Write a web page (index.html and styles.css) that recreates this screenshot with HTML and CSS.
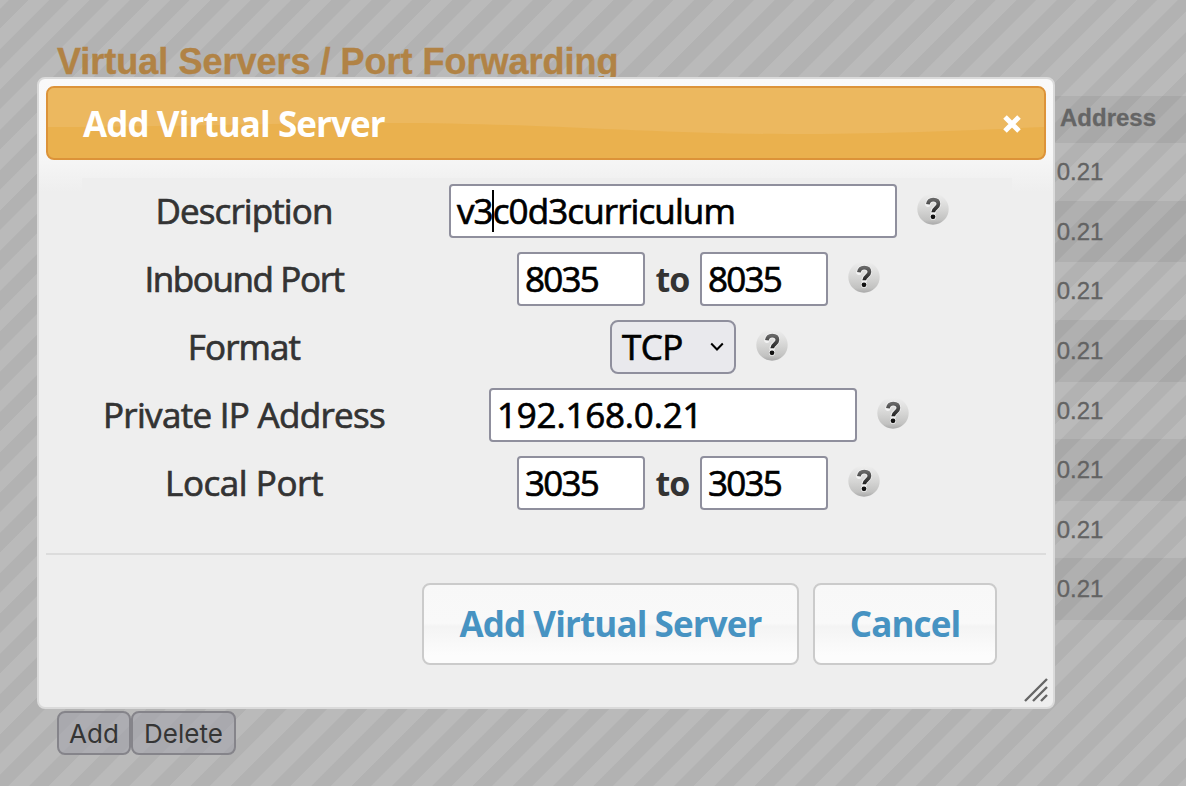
FILE: index.html
```html
<!DOCTYPE html>
<html lang="en">
<head>
<meta charset="utf-8">
<title>Virtual Servers / Port Forwarding</title>
<link rel="stylesheet" href="styles.css">
</head>
<body>
<svg class="defs" width="0" height="0" aria-hidden="true">
  <defs>
    <linearGradient id="disc" x1="0" y1="0" x2="0" y2="1">
      <stop offset="0" stop-color="#efefef"/>
      <stop offset="0.5" stop-color="#d6d6d5"/>
      <stop offset="0.85" stop-color="#c2c2c1"/>
      <stop offset="1" stop-color="#a9a9a9"/>
    </linearGradient>
    <linearGradient id="mark" x1="0" y1="0" x2="0" y2="1">
      <stop offset="0" stop-color="#666"/>
      <stop offset="1" stop-color="#222"/>
    </linearGradient>
    <symbol id="help" viewBox="0 0 32 32">
      <circle cx="16" cy="16" r="15.7" fill="url(#disc)"/>
      <path d="M10.9 11.3C11.4 8.2 13.3 6.6 16.2 6.6c3.2 0 5.2 1.6 5.2 4.4 0 3.9-5.2 4-5.2 8.3" fill="none" stroke="#f2f2f2" stroke-width="5.4" stroke-linecap="round"/>
      <circle cx="16" cy="23.8" r="3.1" fill="#f2f2f2"/>
      <path d="M10.9 11.3C11.4 8.2 13.3 6.6 16.2 6.6c3.2 0 5.2 1.6 5.2 4.4 0 3.9-5.2 4-5.2 8.3" fill="none" stroke="url(#mark)" stroke-width="3.8"/>
      <circle cx="16" cy="23.8" r="2.4" fill="#111"/>
    </symbol>
  </defs>
</svg>

<main class="page">
  <h1 class="page-title">Virtual Servers / Port Forwarding</h1>
  <div class="server-table">
    <div class="row head">Address</div>
    <div class="row">.0.21</div>
    <div class="row alt">.0.21</div>
    <div class="row">.0.21</div>
    <div class="row alt">.0.21</div>
    <div class="row">.0.21</div>
    <div class="row alt">.0.21</div>
    <div class="row">.0.21</div>
    <div class="row alt">.0.21</div>
  </div>
  <div class="page-actions">
    <button class="page-button add">Add</button>
    <button class="page-button delete">Delete</button>
  </div>
</main>

<section class="dialog" role="dialog">
  <header class="titlebar">
    <svg class="gloss" viewBox="0 0 996 70" preserveAspectRatio="none" aria-hidden="true">
      <path d="M0 0H996V39C930 42 840 46 740 46C600 46 500 35 340 35C210 35 120 39 0 39Z"/>
    </svg>
    <h2 class="title">Add Virtual Server</h2>
    <svg class="close" viewBox="0 0 20 20" aria-hidden="true"><path d="M3 3L17 17M17 3L3 17"/></svg>
  </header>
  <form class="fields">
    <div class="field">
      <label class="label description">Description</label>
      <div class="controls">
        <div class="input wide"><span>v3</span><i class="caret"></i><span>c0d3curriculum</span></div>
        <svg class="help"><use href="#help"/></svg>
      </div>
    </div>
    <div class="field">
      <label class="label inbound">Inbound Port</label>
      <div class="controls range">
        <div class="input port">8035</div>
        <b class="to">to</b>
        <div class="input port">8035</div>
        <svg class="help"><use href="#help"/></svg>
      </div>
    </div>
    <div class="field">
      <label class="label format">Format</label>
      <div class="controls">
        <div class="select"><span>TCP</span><svg class="chevron" viewBox="0 0 14 10"><path d="M1.2 1.5L7 7.5L12.8 1.5"/></svg></div>
        <svg class="help"><use href="#help"/></svg>
      </div>
    </div>
    <div class="field">
      <label class="label private">Private IP Address</label>
      <div class="controls">
        <div class="input ip">192.168.0.21</div>
        <svg class="help"><use href="#help"/></svg>
      </div>
    </div>
    <div class="field">
      <label class="label local">Local Port</label>
      <div class="controls range">
        <div class="input port">3035</div>
        <b class="to">to</b>
        <div class="input port">3035</div>
        <svg class="help"><use href="#help"/></svg>
      </div>
    </div>
  </form>
  <footer class="buttons">
    <button class="button submit">Add Virtual Server</button>
    <button class="button cancel">Cancel</button>
  </footer>
  <svg class="grip" viewBox="0 0 24 24" aria-hidden="true"><path d="M1 23L23 1M9 23L23 9M17 23L23 17"/></svg>
</section>
</body>
</html>
```
FILE: styles.css
```css
* { box-sizing: border-box; }
body {
  margin: 0;
  width: 1186px;
  height: 786px;
  overflow: hidden;
  position: relative;
  font-family: "Open Sans", sans-serif;
  color: #333;
  background: repeating-linear-gradient(135deg, #bababa 0, #bababa 6px, #b2b2b2 6.7px, #b2b2b2 19.8px, #bababa 20.5px, #bababa 28.5px);
}
.defs { position: absolute; }

.page { height: 786px; display: flex; flex-direction: column; font-family: "Liberation Sans", Arial, sans-serif; }
.page-title { margin: 0; padding: 41px 0 0 57px; height: 96px; font-size: 36px; line-height: 42px; color: #b18345; white-space: nowrap; -webkit-text-stroke: .4px; }
.server-table { margin-left: 57px; height: 524px; display: grid; grid-template-rows: 47px 58px 61px 58px 62px 57px 62px 57px 62px; }
.row { padding-left: 993px; display: flex; align-items: center; font-size: 24px; color: #636363; -webkit-text-stroke: .3px; }
.row.head { padding: 0 0 3px 1003px; font-weight: bold; color: #656565; background: rgba(0, 0, 0, .05); }
.row.alt { background: rgba(0, 0, 0, .05); }
.page-actions { padding: 91px 0 0 57px; display: flex; }
.page-button {
  height: 44px; padding: 0; border: 2px solid #85848a; border-radius: 8px;
  background: rgba(160, 160, 170, .5); color: #353535; font: 26px Inter, sans-serif;
}
.add { width: 74px; }
.delete { width: 105px; }

.dialog {
  position: absolute; left: 37px; top: 77px; width: 1018px; height: 632px;
  padding: 7px; border: 2px solid #dadada; border-radius: 8px;
  background: #eee linear-gradient(#f9f9f9, #f7f7f7 75px, #eee 113px) no-repeat;
}
.titlebar {
  position: relative; height: 74px; padding: 2px 22px 0 35px;
  display: flex; align-items: center; justify-content: space-between;
  border: 2px solid #dc9339; border-radius: 8px;
  background: #eab14e; overflow: hidden;
}
.gloss { position: absolute; left: 0; top: 0; width: 100%; height: 100%; fill: #ecb85f; }
.title { position: relative; margin: 0; font-size: 35px; line-height: 48px; letter-spacing: -.92px; color: #fff; white-space: nowrap; }
.close { position: relative; width: 20px; height: 20px; fill: none; stroke: #fff; stroke-width: 5; }

.fields { margin: 18px 34px 0 36px; padding-top: 6px; height: 375px; display: flex; flex-direction: column; gap: 14px; background: #eee; }
.field { display: grid; grid-template-columns: 324px 586px; height: 54px; align-items: center; }
.label { text-align: center; font-size: 35px; line-height: 54px; white-space: nowrap; -webkit-text-stroke: .7px; }
.description { letter-spacing: -.9px; }
.inbound { letter-spacing: -1.4px; }
.format { letter-spacing: -.9px; }
.private { letter-spacing: -.7px; }
.local { letter-spacing: -.45px; }
.controls { display: flex; justify-content: center; align-items: center; }
.range { padding-right: 1px; }
.input {
  height: 54px; padding-left: 6px; display: flex; align-items: center;
  border: 2px solid #8f8f9d; border-radius: 4px; background: #fff;
  color: #000; font-size: 35px; line-height: 46px; padding-bottom: 1px; white-space: nowrap; -webkit-text-stroke: .7px;
}
.wide { width: 448px; letter-spacing: -.9px; }
.port { width: 128px; letter-spacing: -1.8px; }
.ip { width: 368px; letter-spacing: -.2px; }
.caret { width: 2px; height: 42px; margin: 0 -1px; background: #000; }
.to { width: 55px; text-align: center; font-size: 34px; letter-spacing: -1px; }
.select {
  width: 126px; height: 54px; padding: 0 10px; display: flex; align-items: center; justify-content: space-between;
  border: 2px solid #8f8f9d; border-radius: 8px; background: #e9e9ed; color: #000;
  font-size: 35px; line-height: 46px; letter-spacing: -.5px; -webkit-text-stroke: .7px;
}
.chevron { width: 14px; height: 10px; fill: none; stroke: #000; stroke-width: 2; }
.help { width: 32px; height: 32px; margin: -5px 0 0 20px; }

.buttons { height: 146px; padding: 28px 49px 0 0; display: flex; justify-content: flex-end; gap: 14px; border-top: 2px solid #dcdcdc; }
.button {
  height: 82px; padding: 0 0 1px; border: 2px solid #cbcbcb; border-radius: 8px;
  background: linear-gradient(#f8f8f8, #f9f9f9 49%, #f4f4f4 53%, #fcfcfc 90%);
  color: #4793c2; font: bold 35px "Open Sans", sans-serif; letter-spacing: -.9px; white-space: nowrap;
}
.submit { width: 377px; }
.cancel { width: 184px; }
.grip { position: absolute; right: 5px; bottom: 5px; width: 24px; height: 24px; fill: none; stroke: #666; stroke-width: 2.4; }
```
